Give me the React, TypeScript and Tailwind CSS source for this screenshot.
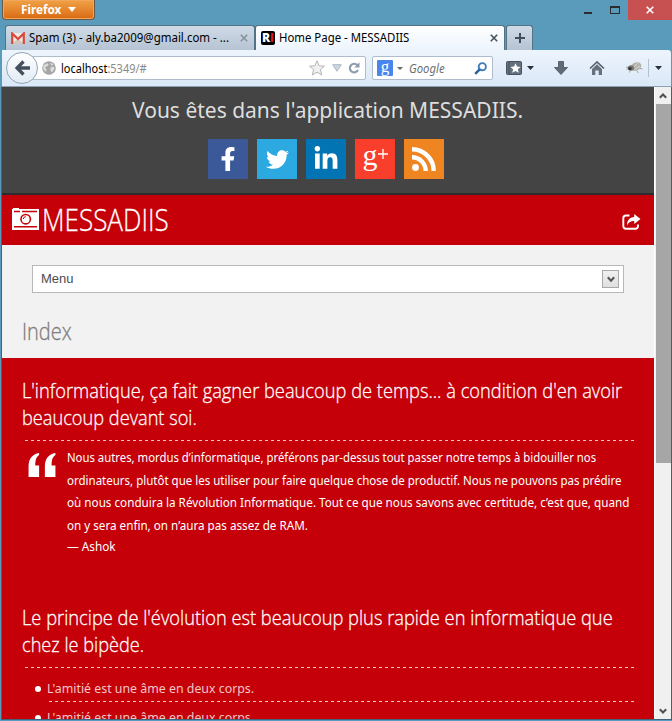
import { useLayoutEffect, useRef, useState, type ReactNode } from "react";
import { FaFacebookF, FaTwitter, FaLinkedinIn } from "react-icons/fa";

const ui = "font-['Noto_Sans',sans-serif]";
const display = "font-['Open_Sans',sans-serif] font-light [-webkit-text-stroke:0.3px]";

/** A single line of text, condensed or widened to an exact measure. */
function Line({ width, className, children }: { width: number; className: string; children: ReactNode }) {
  const ref = useRef<HTMLSpanElement>(null);
  const [scale, setScale] = useState(1);
  useLayoutEffect(() => {
    const measure = () => {
      if (ref.current && ref.current.offsetWidth) {
        setScale(width / ref.current.offsetWidth);
      }
    };
    measure();
    document.fonts.ready.then(measure);
  }, [width]);
  return (
    <div className={`shrink-0 whitespace-nowrap ${className}`} style={{ width }}>
      <span ref={ref} className="inline-block origin-left" style={{ transform: `scaleX(${scale})` }}>
        {children}
      </span>
    </div>
  );
}

function Dashes({ className }: { className: string }) {
  return (
    <div
      className={`h-px bg-[repeating-linear-gradient(90deg,#efc4c6_0_3px,transparent_3px_6px)] ${className}`}
    />
  );
}

function TitleBar() {
  return (
    <div className="flex h-[25px] items-start justify-between pl-[2px]">
      <button className="flex h-5 w-[93px] items-center rounded-b-[4px] border border-t-0 border-[#6b5947] bg-gradient-to-b from-[#f0a245] to-[#d96a0f] pl-[18px] shadow-[inset_0_0_0_1px_#f1a65b]">
        <Line width={40} className={`${ui} text-[12px] leading-[18px] font-bold text-white`}>Firefox</Line>
        <svg className="ml-[7px]" width="8" height="5" viewBox="0 0 8 5"><path d="M0 0h8L4 5z" fill="#fff" /></svg>
      </button>
      <div className="flex h-5 items-start">
        <svg width="44" height="20" viewBox="0 0 44 20" shapeRendering="crispEdges">
          <rect x="0" y="12" width="8" height="2" fill="#2c2c2c" />
          <path d="M26 6h10v8H26zm1 2v5h8V8z" fill="#2c2c2c" fillRule="evenodd" />
        </svg>
        <div className="flex h-5 w-11 items-center justify-center bg-[#c75050]">
          <svg width="8" height="8" viewBox="0 0 8 8"><path d="M.7.7l6.6 6.6M7.3.7L.7 7.3" stroke="#fff" strokeWidth="1.6" /></svg>
        </div>
      </div>
    </div>
  );
}

function Cross({ color }: { color: string }) {
  return (
    <svg width="8" height="8" viewBox="0 0 8 8"><path d="M.8.8l6.4 6.4M7.2.8L.8 7.2" stroke={color} strokeWidth="1.6" /></svg>
  );
}

function Tabs() {
  return (
    <div className="flex h-[25px] pl-[5px]">
      <div className="flex w-[250px] items-center rounded-t-[3px] border border-b-0 border-[#527285] bg-gradient-to-b from-[#d0dbe6] to-[#b5c3d3] pl-[5px]">
        <svg width="14" height="12" viewBox="0 0 14 12">
          <path d="M0 1h14v11H0z" fill="#eee8df" />
          <path d="M7 7l7 5H0z" fill="#cfc8bb" />
          <path d="M1.2 12V1.5L7 7l5.8-5.5V12" fill="none" stroke="#d9463c" strokeWidth="2.2" />
        </svg>
        <Line width={200} className={`${ui} ml-[4px] text-[12px] leading-6 text-black`}>Spam (3) - aly.ba2009@gmail.com - ...</Line>
        <div className="ml-[11px]"><Cross color="#87919a" /></div>
      </div>
      <div className="flex w-[250px] items-center rounded-t-[3px] border border-b-0 border-[#527285] bg-gradient-to-b from-white to-[#edf4fc] pl-[5px]">
        <div className="flex h-[14px] w-[14px] items-center justify-center rounded-[2px] bg-black font-['Open_Sans',sans-serif] text-[12px] leading-none font-extrabold text-white">
          R<span className="text-[#e0141a]">i</span>
        </div>
        <Line width={130} className={`${ui} ml-[4px] text-[12px] leading-6 text-black`}>Home Page - MESSADIIS</Line>
        <div className="ml-[81px]"><Cross color="#46515a" /></div>
      </div>
      <div className="ml-px flex w-[27px] items-center justify-center rounded-t-[3px] border border-b-0 border-[#527285] bg-gradient-to-b from-[#d0dbe6] to-[#b5c3d3]">
        <svg width="10" height="10" viewBox="0 0 10 10"><path d="M4 0h2v4h4v2H6v4H4V6H0V4h4z" fill="#414e59" /></svg>
      </div>
    </div>
  );
}

function NavBar() {
  return (
    <div className="mr-px ml-[2px] flex h-[37px] items-center rounded-tr-[3px] border-b border-[#8ca0b3] bg-gradient-to-b from-[#edf4fc] to-[#dae8f7] pl-1">
      <div className="z-10 flex h-8 w-8 shrink-0 items-center justify-center rounded-full border border-[#93a4b5] bg-gradient-to-b from-white to-[#e1ebf5]">
        <svg width="15" height="16" viewBox="0 0 15 16"><path d="M8.500 1.500L2 8l6.500 6.500M2.500 8H15" fill="none" stroke="#414f5f" strokeWidth="3.300" /></svg>
      </div>
      <div className="-ml-[6px] flex h-6 w-[334px] shrink-0 items-center rounded-r-[2px] border border-[#aebccb] bg-white pl-[9px]">
        <svg width="14" height="14" viewBox="0 0 14 14">
          <circle cx="7" cy="7" r="6.800" fill="#a5a5a5" />
          <path d="M1.500 4.500L5 2.200l1.800 1L5.500 5 3 6.200l1.500 2.300-.5 2.500L1.200 8zM8.200 1.500l3.300 1.800-2 1.500zM8.500 6.500l3-1 1 2-2.500 4-1.500-2z" fill="#dedede" />
        </svg>
        <Line width={86} className={`${ui} mt-[2px] ml-[5px] text-[12px] leading-[22px] text-[#8a8a8a]`}><span className="text-black">localhost</span>:5349/#</Line>
        <svg className="ml-[162px]" width="16" height="16" viewBox="0 0 16 16"><path d="M8 .8l2.100 5 5.300.4-4 3.500 1.300 5.300L8 12.200 3.300 15l1.300-5.300-4-3.500 5.300-.4z" fill="#f1f1f1" stroke="#b4b4b4" /></svg>
        <svg className="ml-[7px]" width="10" height="8" viewBox="0 0 10 8"><path d="M.7.7h8.600L5 7.300z" fill="#cdd6df" stroke="#acb9c6" /></svg>
        <svg className="ml-[6px]" width="12" height="12" viewBox="0 0 12 12"><path d="M9.400 3.200A4.300 4.300 0 1 0 10 8" fill="none" stroke="#8e9cab" strokeWidth="2.200" /><path d="M11.500.3v5.200H6.300z" fill="#8e9cab" /></svg>
      </div>
      <div className="ml-[6px] flex h-6 w-[121px] shrink-0 items-center rounded-[2px] border border-[#aebccb] bg-white pl-1">
        <div className="flex h-4 w-4 items-center justify-center rounded-[1px] bg-[#4886ee] pb-[4px] font-['Liberation_Serif',serif] text-[17px] leading-none text-white">g</div>
        <svg className="ml-[4px]" width="6" height="3" viewBox="0 0 6 3"><path d="M0 0h6L3 3z" fill="#666" /></svg>
        <Line width={36} className={`${ui} mt-[2px] ml-[6px] text-[12px] leading-[22px] text-[#6f6f6f] italic`}>Google</Line>
        <svg className="ml-[29px]" width="13" height="13" viewBox="0 0 13 13"><circle cx="8.300" cy="4.700" r="3.600" fill="none" stroke="#3f7db8" strokeWidth="1.900" /><path d="M5.700 7.300L1.200 11.800" stroke="#2a609c" strokeWidth="2.500" /></svg>
      </div>
      <svg className="ml-[13px] shrink-0" width="28" height="14" viewBox="0 0 28 14">
        <rect x=".5" y=".5" width="15" height="13" rx="1" fill="#63707d" stroke="#46525e" />
        <path d="M3 1v12" stroke="#46525e" />
        <path d="M9.500 2.200l1.500 3.300 3.600.4-2.700 2.400.8 3.500-3.200-1.800-3.200 1.800.8-3.500-2.700-2.400 3.600-.4z" fill="#fff" />
        <path d="M21 5h7l-3.500 4z" fill="#27323d" />
      </svg>
      <svg className="ml-[20px] shrink-0" width="14" height="14" viewBox="0 0 14 14"><path d="M4.500.5h5v6h4L7 13.500.5 6.500h4z" fill="#5f6b77" stroke="#46525e" strokeWidth=".8" /></svg>
      <svg className="ml-[21px] shrink-0" width="16" height="14" viewBox="0 0 16 14"><path d="M1 7.500L8 1l7 6.500" fill="none" stroke="#55616d" strokeWidth="1.700" /><path d="M3 8l5-4.700L13 8v6H9.700V9.500H6.300V14H3z" fill="#65717c" /></svg>
      <svg className="ml-[20px] shrink-0" width="18" height="14" viewBox="0 0 18 14">
        <path d="M1 6l3 1-2.500 1.500m4 0l-1 3m7-2l2 2.500m0-5l4 1" stroke="#a5a5a0" fill="none" />
        <ellipse cx="11" cy="5.500" rx="5.500" ry="4" transform="rotate(-25 11 5.500)" fill="#b3b2aa" />
        <ellipse cx="6" cy="7" rx="3.200" ry="2.700" fill="#777" />
        <ellipse cx="5" cy="7.500" rx="1.800" ry="1.500" fill="#383838" />
        <path d="M9 6l4-4M10 8l5-3" stroke="#dadad4" />
      </svg>
      <div className="ml-[5px] h-[18px] w-px shrink-0 bg-[#b3c1d0]" />
      <svg className="ml-[6px] shrink-0" width="7" height="4" viewBox="0 0 7 4"><path d="M0 0h7L3.500 4z" fill="#27323d" /></svg>
    </div>
  );
}

function SocialLinks() {
  const tile = "flex h-10 w-10 items-center justify-center text-white";
  return (
    <div className="mt-[14px] flex justify-center gap-[9px] pr-[4px]">
      <div className={`${tile} bg-[#3b5998]`}><FaFacebookF size={24} /></div>
      <div className={`${tile} bg-[#2ca9e1]`}><FaTwitter size={23} /></div>
      <div className={`${tile} bg-[#0274b3]`}><FaLinkedinIn size={26} /></div>
      <div className={`${tile} bg-[#f93f2b] font-['Liberation_Serif',serif]`}>
        <span className="-mt-[8px] text-[30px] leading-none">g</span>
        <svg className="mb-[11px]" width="10" height="10" viewBox="0 0 10 10"><path d="M5 0v10M0 5h10" stroke="#fff" strokeWidth="1.300" /></svg>
      </div>
      <div className={`${tile} bg-[#ef8521]`}>
        <svg width="24" height="24" viewBox="0 0 24 24">
          <circle cx="3.500" cy="20.500" r="3.400" fill="#fff" />
          <path d="M0 10.300A13.700 13.700 0 0 1 13.700 24M0 2.300A21.700 21.700 0 0 1 21.700 24" fill="none" stroke="#fff" strokeWidth="4.400" />
        </svg>
      </div>
    </div>
  );
}

function BrandBar() {
  return (
    <div className="flex h-[50px] items-center justify-between bg-[#c50008] pr-[13px] pl-[10px]">
      <div className="flex items-center">
        <svg className="-mt-[2px]" width="27" height="22" viewBox="0 0 27 22">
          <path d="M0 1h1V0h6v1h20v21H0z" fill="#fff" />
          <path d="M2 3.500h6M10 3.500h15M2 18.700h23" stroke="#c50008" strokeWidth="1.600" />
          <circle cx="13.700" cy="11.200" r="4.700" fill="none" stroke="#c50008" strokeWidth="1.600" />
          <path d="M11.300 11a2.500 2.500 0 0 1 2.500-2.300" fill="none" stroke="#c50008" />
        </svg>
        <Line width={127} className={`${display} -mt-[2px] ml-[3px] text-[31px] leading-[50px] text-white`}>MESSADIIS</Line>
      </div>
      <svg className="mt-[3px]" width="19" height="16" viewBox="0 0 19 16">
        <path d="M7.500 1.500H4A2.700 2.700 0 0 0 1.300 4.200v8A2.500 2.500 0 0 0 3.800 14.700h9.700A2.500 2.500 0 0 0 16 12.200V10.500" fill="none" stroke="#fff" strokeWidth="1.900" />
        <path d="M12.200 0L18.500 5l-6.300 5V7C9 7 7 8 5 11.500 5 6.500 7.500 3.200 12.200 3z" fill="#fff" />
      </svg>
    </div>
  );
}

function MenuArea() {
  return (
    <div className="flex h-[113px] flex-col bg-[#f2f2f2] pt-5">
      <div className="ml-[30px] flex h-7 w-[592px] items-center justify-between border border-[#b8b8b8] bg-white pr-1 pl-2">
        <Line width={33} className="font-['Liberation_Sans',sans-serif] text-[13px] leading-[26px] text-[#4c4c4c]">Menu</Line>
        <div className="flex h-[18px] w-[17px] items-center justify-center border border-[#a9a9a9] bg-gradient-to-b from-[#f0f0f0] to-[#e0e0e0]">
          <svg width="8" height="7" viewBox="0 0 8 7"><path d="M.8 1.200L4 4.600l3.200-3.400" fill="none" stroke="#555" strokeWidth="2.100" /></svg>
        </div>
      </div>
      <Line width={50} className={`${display} mt-[22px] ml-5 text-[24px] leading-8 text-[#7c7c7c]`}>Index</Line>
    </div>
  );
}

function Heading({ lines }: { lines: [string, number][] }) {
  return (
    <h2 className="ml-5">
      {lines.map(([text, width]) => (
        <Line key={text} width={width} className={`${display} text-[21px] leading-[27px] text-white`}>{text}</Line>
      ))}
    </h2>
  );
}

function Content() {
  const body = `${ui} text-[12px] text-white`;
  const items = ["first", "second"];
  return (
    <div className="flex flex-1 flex-col overflow-hidden bg-[#c50008] pt-[19px]">
      <Heading lines={[["L'informatique, ça fait gagner beaucoup de temps... à condition d'en avoir", 600], ["beaucoup devant soi.", 175]]} />
      <Dashes className="mt-[9px] ml-[23px] w-[609px] shrink-0" />
      <blockquote className="flex pt-[6px] pl-[26px]">
        <svg className="mt-[6px] shrink-0" width="28" height="24" viewBox="0 0 28 25">
          <path d="M11 0v2C8 4 7 7 7 13h4v12H0V14C0 6 4 1 11 0zM28 0v2c-3 2-4 5-4 11h4v12H17V14C17 6 21 1 28 0z" fill="#fff" />
        </svg>
        <div className="ml-[11px]">
          <Line width={529} className={`${body} leading-[22.700px]`}>Nous autres, mordus d’informatique, préférons par-dessus tout passer notre temps à bidouiller nos</Line>
          <Line width={555} className={`${body} leading-[22.700px]`}>ordinateurs, plutôt que les utiliser pour faire quelque chose de productif. Nous ne pouvons pas prédire</Line>
          <Line width={562} className={`${body} leading-[22.700px]`}>où nous conduira la Révolution Informatique. Tout ce que nous savons avec certitude, c’est que, quand</Line>
          <Line width={241} className={`${body} leading-[22.700px]`}>on y sera enfin, on n’aura pas assez de RAM.</Line>
          <Line width={49} className={`${body} leading-[17px]`}>— Ashok</Line>
        </div>
      </blockquote>
      <div className="h-[49px] shrink-0" />
      <Heading lines={[["Le principe de l'évolution est beaucoup plus rapide en informatique que", 591], ["chez le bipède.", 122]]} />
      <Dashes className="mt-[9px] ml-[23px] w-[609px] shrink-0" />
      <ul className="pt-[8px]">
        {items.map((id) => (
          <li key={id} className="h-[29px] shrink-0 pt-[3px] pl-[33px]">
            <div className="flex items-center">
              <span className="h-[6px] w-[6px] rounded-full bg-white" />
              <Line width={207} className={`${ui} ml-[6px] text-[12px] leading-[20px] text-[#f2c5c7]`}>L'amitié est une âme en deux corps.</Line>
            </div>
            <Dashes className="mt-[2px] ml-[14px] w-[585px]" />
          </li>
        ))}
      </ul>
    </div>
  );
}

function Scrollbar() {
  return (
    <div className="flex w-[17px] shrink-0 flex-col items-center border-l border-white bg-[#f0f0f0]">
      <div className="flex h-[17px] items-center">
        <svg width="8" height="6" viewBox="0 0 8 6"><path d="M.8 4.800L4 1.500l3.200 3.300" fill="none" stroke="#505050" strokeWidth="2" /></svg>
      </div>
      <div className="h-[359px] w-[15px] bg-[#a6a6a6]" />
      <div className="mt-auto flex h-[17px] items-center">
        <svg width="8" height="6" viewBox="0 0 8 6"><path d="M.8 1.200L4 4.500l3.200-3.300" fill="none" stroke="#505050" strokeWidth="2" /></svg>
      </div>
    </div>
  );
}

export default function App() {
  return (
    <div className="flex h-[721px] w-[672px] flex-col overflow-hidden bg-[#5a9aba]">
      <TitleBar />
      <Tabs />
      <NavBar />
      <div className="ml-px flex h-[633px] border-r border-b border-l border-[#3f6478]">
        <div className="flex min-w-0 flex-1 flex-col">
          <header className="h-[108px] shrink-0 border-b-2 border-[#2b2b2b] bg-[#444] pt-[8px]">
            <Line width={391} className={`${ui} ml-[130px] text-[21px] leading-[30px] text-[#dedede]`}>Vous êtes dans l'application MESSADIIS.</Line>
            <SocialLinks />
          </header>
          <BrandBar />
          <MenuArea />
          <Content />
        </div>
        <Scrollbar />
      </div>
    </div>
  );
}
